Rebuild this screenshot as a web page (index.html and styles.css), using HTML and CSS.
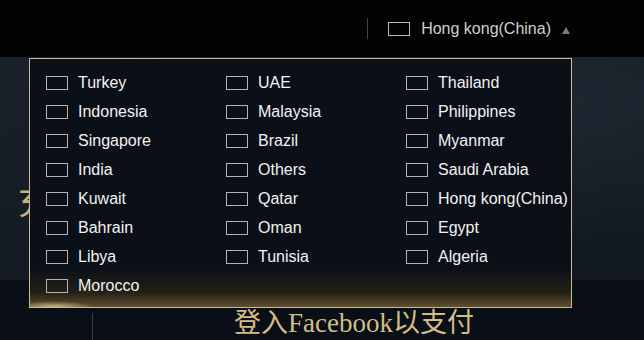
FILE: index.html
```html
<!DOCTYPE html>
<html>
  <head>
    <title>Top up</title>
    <link rel="stylesheet" href="styles.css">
  </head>
  <body>
    <div class="topbar">
      <span class="divider"></span>
      <div class="region">
        <span class="box"></span>
        <span class="region-name">Hong kong(China)</span>
        <span class="arrow"></span>
      </div>
    </div>
    <div class="stage">
      <div class="banner">
        <h1 class="headline">充值中心</h1>
      </div>
      <div class="login-row">
        <div class="side"></div>
        <div class="login-title">登入Facebook以支付</div>
      </div>
    </div>

    <div class="region-menu">
      <ul class="countries">
        <li><span class="box"></span>Turkey</li>
        <li><span class="box"></span>UAE</li>
        <li><span class="box"></span>Thailand</li>
        <li><span class="box"></span>Indonesia</li>
        <li><span class="box"></span>Malaysia</li>
        <li><span class="box"></span>Philippines</li>
        <li><span class="box"></span>Singapore</li>
        <li><span class="box"></span>Brazil</li>
        <li><span class="box"></span>Myanmar</li>
        <li><span class="box"></span>India</li>
        <li><span class="box"></span>Others</li>
        <li><span class="box"></span>Saudi Arabia</li>
        <li><span class="box"></span>Kuwait</li>
        <li><span class="box"></span>Qatar</li>
        <li><span class="box"></span>Hong kong(China)</li>
        <li><span class="box"></span>Bahrain</li>
        <li><span class="box"></span>Oman</li>
        <li><span class="box"></span>Egypt</li>
        <li><span class="box"></span>Libya</li>
        <li><span class="box"></span>Tunisia</li>
        <li><span class="box"></span>Algeria</li>
        <li><span class="box"></span>Morocco</li>
      </ul>
    </div>
  </body>
</html>
```

FILE: styles.css
```css
html, body {
  margin: 0;
  height: 100%;
  overflow: hidden;
}
body {
  font-family: "Liberation Sans", Arial, sans-serif;
  background: #0a0e16;
  position: relative;
}
.topbar {
  height: 57px;
  background: #030304;
  display: flex;
  align-items: center;
  justify-content: flex-end;
  padding-right: 74px;
}
.divider {
  width: 1px;
  height: 21px;
  background: #444;
  margin-right: 20px;
}
.region {
  display: flex;
  align-items: center;
  color: #cfcfcf;
  font-size: 16px;
}
.box {
  display: inline-block;
  width: 20px;
  height: 12px;
  border: 1px solid #b4b4b4;
  flex: none;
}
.region .box {
  border-color: #b9b9b9;
  margin-right: 11px;
}
.region-name {
  line-height: 20px;
}
.arrow {
  width: 0;
  height: 0;
  border-left: 4px solid transparent;
  border-right: 4px solid transparent;
  border-bottom: 7px solid #7b7b7b;
  margin-left: 11px;
  margin-top: 3px;
}
.banner {
  height: 223px;
  background:
    radial-gradient(ellipse at 80% 20%, rgba(60, 66, 80, 0.35), transparent 60%),
    linear-gradient(160deg, #1b212b 0%, #141a23 50%, #121821 100%);
}
.headline {
  margin: 0;
  padding: 118px 0 0 18px;
  font-family: "Noto Sans CJK SC", sans-serif;
  font-weight: normal;
  font-size: 34px;
  color: #c8b27a;
}
.login-row {
  display: flex;
  height: 60px;
}
.side {
  width: 92px;
  border-right: 1px solid #3b3f47;
  margin-top: 33px;
}
.login-title {
  margin-left: 141px;
  margin-top: 27px;
  font-family: "Liberation Serif", "Noto Sans CJK SC", serif;
  font-size: 27px;
  color: #d3bd86;
  line-height: 32px;
}
.region-menu {
  position: absolute;
  top: 58px;
  left: 29px;
  width: 541px;
  height: 248px;
  border: 1px solid #c9bb90;
  background:
    radial-gradient(ellipse 40px 6px at 24px 100%, rgba(255, 230, 170, 0.7), transparent),
    linear-gradient(to bottom, #0a0f18 84%, #231f16 94%, #5e4f30 100%);
}
.countries {
  list-style: none;
  margin: 0;
  padding: 9px 0 0 16px;
  display: grid;
  grid-template-columns: repeat(3, 180px);
  grid-auto-rows: 29px;
}
.countries li {
  display: flex;
  align-items: center;
  color: #f2f2f2;
  font-size: 16px;
  white-space: nowrap;
}
.countries .box {
  margin-right: 10px;
}
```
